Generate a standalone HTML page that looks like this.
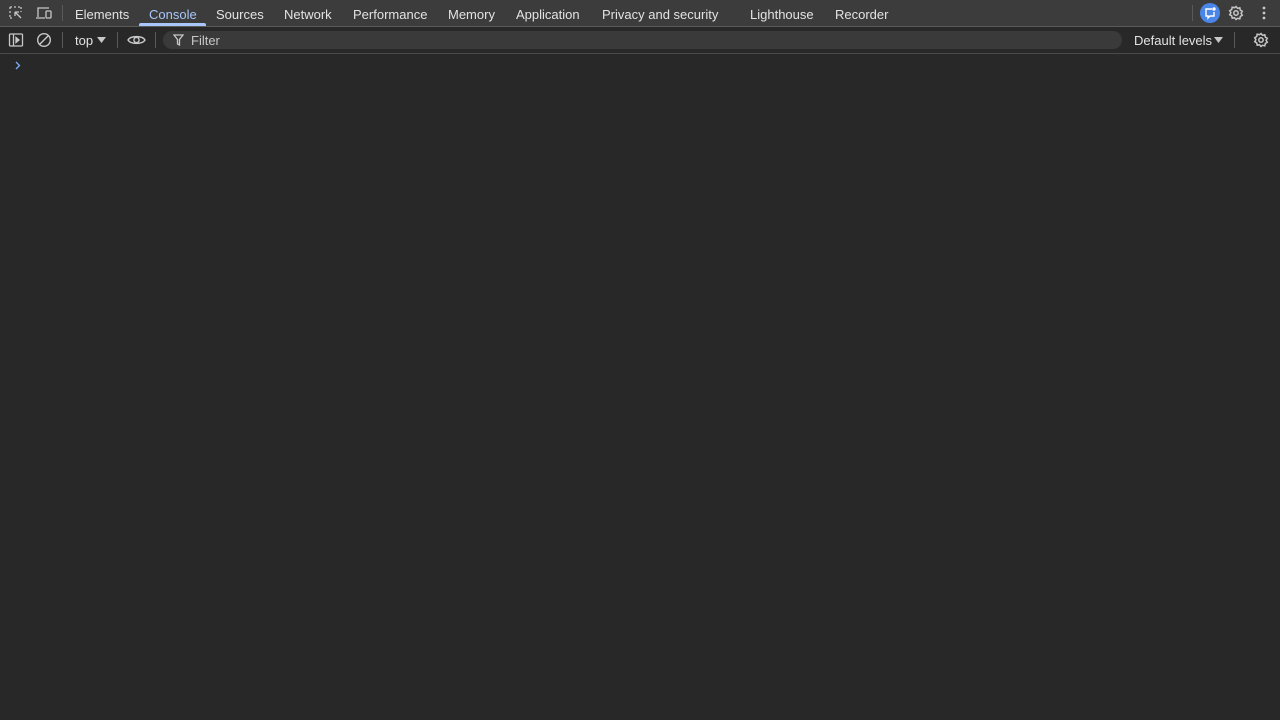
<!DOCTYPE html>
<html><head><style>
body{margin:0;width:1280px;height:720px;background:#282828;font-family:"Liberation Sans",sans-serif;color:#e3e3e3;overflow:hidden;position:relative}
.bar1{position:absolute;left:0;top:0;width:1280px;height:26px;background:#3c3c3c;border-bottom:1px solid #5a5a5a}
.bar2{position:absolute;left:0;top:27px;width:1280px;height:26px;background:#282828;border-bottom:1px solid #4a4a4a}
.t{position:absolute;top:7px;font-size:13px;color:#e3e3e3}
.sep{position:absolute;width:1px;height:16px;background:#5a5a5a}
svg{position:absolute}
</style></head><body>
<div class="bar1">
<svg x="0" style="left:8px;top:5px" width="16" height="16" viewBox="0 0 16 16" fill="none" stroke="#c7c7c7" stroke-width="1.3"><path d="M2 2h2M6 2h2M10 2h2M2 2v2M2 6v2M2 10v2M2 13h2M13 2v2M13 6v1"/><path d="M7 7l6 6M7 7h4M7 7v4"/></svg>
<svg style="left:35px;top:5px" width="18" height="16" viewBox="0 0 18 16" fill="none" stroke="#c7c7c7" stroke-width="1.3"><path d="M3 12V3h11M1 13h9"/><rect x="11" y="6" width="5" height="7" rx="1"/></svg>
<div class="sep" style="left:62px;top:5px"></div>
<span class="t" style="left:75px">Elements</span>
<span class="t" style="left:149px;color:#a8c7fa">Console</span>
<div style="position:absolute;left:139px;top:23px;width:67px;height:3px;background:#a8c7fa;border-radius:2px 2px 0 0"></div>
<span class="t" style="left:216px">Sources</span>
<span class="t" style="left:284px">Network</span>
<span class="t" style="left:353px">Performance</span>
<span class="t" style="left:448px">Memory</span>
<span class="t" style="left:516px">Application</span>
<span class="t" style="left:602px">Privacy and security</span>
<span class="t" style="left:750px">Lighthouse</span>
<span class="t" style="left:835px">Recorder</span>
<div class="sep" style="left:1192px;top:5px"></div>
<div style="position:absolute;left:1200px;top:3px;width:20px;height:20px;border-radius:50%;background:#4a86e8"></div>
<svg style="left:1203px;top:6px" width="14" height="14" viewBox="0 0 14 14" fill="none" stroke="#fff" stroke-width="1.4"><path d="M9 3H3v7h2v2l2-2h4V6"/><circle cx="11" cy="3" r="1" fill="#fff"/></svg>
<svg style="left:1228px;top:5px" width="16" height="16" viewBox="0 0 16 16" fill="none" stroke="#c7c7c7" stroke-width="1.5"><circle cx="8" cy="8" r="2.2"/><path d="M8 1.5l1.5 1.8 2.3-.5.5 2.3 2 1.2-1.2 2 1.2 2-2 1.2-.5 2.3-2.3-.5L8 14.5l-1.5-1.8-2.3.5-.5-2.3-2-1.2 1.2-2-1.2-2 2-1.2.5-2.3 2.3.5z"/></svg>
<svg style="left:1262px;top:6px" width="4" height="14" viewBox="0 0 4 14" fill="#c7c7c7"><circle cx="2" cy="2" r="1.4"/><circle cx="2" cy="7" r="1.4"/><circle cx="2" cy="12" r="1.4"/></svg>
</div>
<div class="bar2">
<svg style="left:8px;top:5px" width="16" height="16" viewBox="0 0 16 16" fill="none" stroke="#c7c7c7" stroke-width="1.3"><rect x="1.5" y="2" width="13" height="12" rx="1"/><path d="M5.5 2v12"/><path d="M8 5.5l3 2.5-3 2.5z" fill="#c7c7c7"/></svg>
<svg style="left:36px;top:5px" width="16" height="16" viewBox="0 0 16 16" fill="none" stroke="#c7c7c7" stroke-width="1.4"><circle cx="8" cy="8" r="6.3"/><path d="M3.5 12.5l9-9"/></svg>
<div class="sep" style="left:62px;top:5px"></div>
<span class="t" style="left:75px;top:6px">top</span>
<svg style="left:97px;top:10px" width="9" height="6" viewBox="0 0 9 6" fill="#c7c7c7"><path d="M0 0h9L4.5 6z"/></svg>
<div class="sep" style="left:117px;top:5px"></div>
<svg style="left:127px;top:6px" width="19" height="14" viewBox="0 0 19 14" fill="none" stroke="#c7c7c7" stroke-width="1.4"><path d="M1 7c2.5-4.5 14.5-4.5 17 0c-2.5 4.5-14.5 4.5-17 0z"/><circle cx="9.5" cy="7" r="2.6"/></svg>
<div class="sep" style="left:155px;top:5px"></div>
<div style="position:absolute;left:163px;top:4px;width:959px;height:18px;background:#3a3a3a;border-radius:9px"></div>
<svg style="left:173px;top:7px" width="11" height="12" viewBox="0 0 11 12" fill="none" stroke="#c7c7c7" stroke-width="1.3"><path d="M1 1h9L6.5 5.5V11L4.5 10V5.5z"/></svg>
<span class="t" style="left:191px;top:6px;color:#c7c7c7">Filter</span>
<span class="t" style="left:1134px;top:6px">Default levels</span>
<svg style="left:1214px;top:10px" width="9" height="6" viewBox="0 0 9 6" fill="#c7c7c7"><path d="M0 0h9L4.5 6z"/></svg>
<div class="sep" style="left:1234px;top:5px"></div>
<svg style="left:1253px;top:5px" width="16" height="16" viewBox="0 0 16 16" fill="none" stroke="#c7c7c7" stroke-width="1.5"><circle cx="8" cy="8" r="2.2"/><path d="M8 1.5l1.5 1.8 2.3-.5.5 2.3 2 1.2-1.2 2 1.2 2-2 1.2-.5 2.3-2.3-.5L8 14.5l-1.5-1.8-2.3.5-.5-2.3-2-1.2 1.2-2-1.2-2 2-1.2.5-2.3 2.3.5z"/></svg>
</div>
<svg style="left:15px;top:61px" width="6" height="9" viewBox="0 0 6 9" fill="none" stroke="#7cacf8" stroke-width="1.3"><path d="M1 1l3.5 3.5L1 8"/></svg>
</body></html>
